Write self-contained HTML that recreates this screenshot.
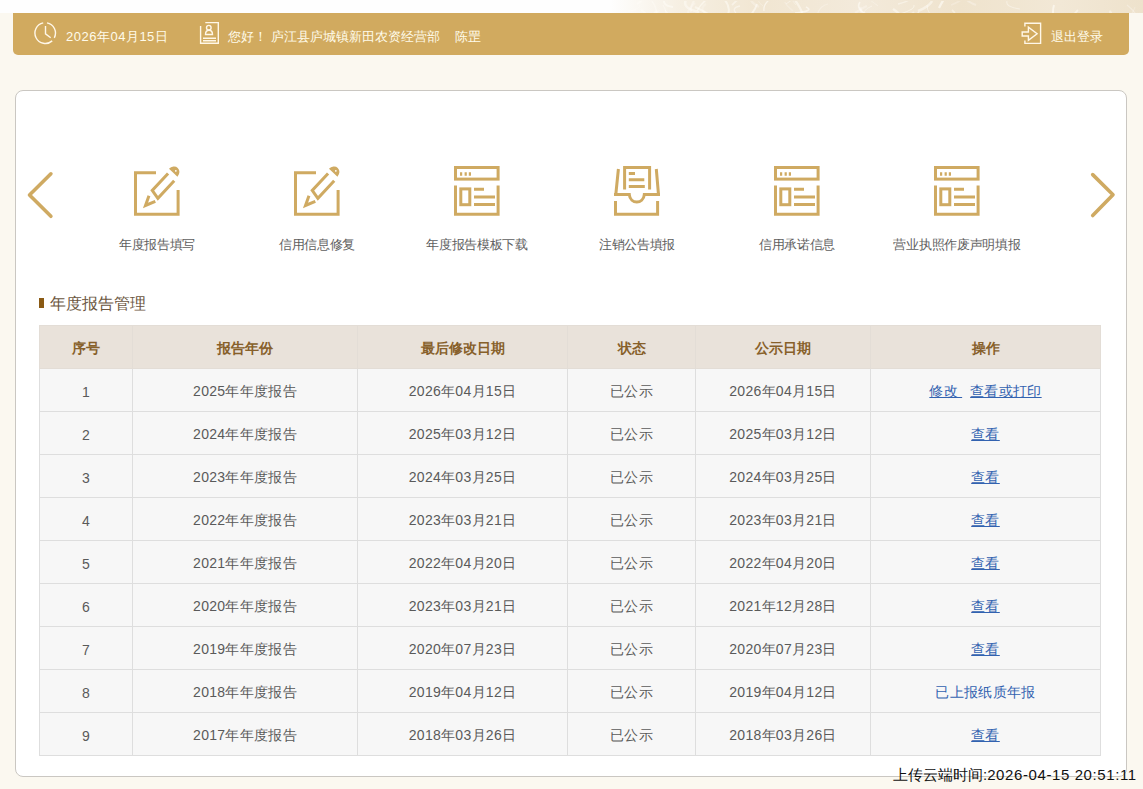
<!DOCTYPE html>
<html><head><meta charset="utf-8">
<style>
*{margin:0;padding:0;box-sizing:border-box}
html,body{width:1143px;height:789px;overflow:hidden}
body{background:#fbf8f0;font-family:"Liberation Sans",sans-serif;position:relative}
.topdeco{position:absolute;left:0;top:0;width:1143px;height:13px;overflow:hidden;background:linear-gradient(90deg,#fefefe 0,#fefefe 610px,#f6efe2 680px,#f1e6d2 760px,#f3eadb 860px,#efe3cd 960px,#f2e8d6 1060px,#eee2cc 1143px)}
.hdr{position:absolute;left:13px;top:13px;width:1116px;height:42px;background:#d1aa5f;border-radius:0 0 5px 5px;color:#fffbea;font-size:13px}
.hdr span{position:absolute;top:15px;line-height:18px;white-space:nowrap}
.hdr svg{position:absolute;left:0;top:0}
.card{position:absolute;left:15px;top:90px;width:1112px;height:687px;background:#fff;border:1px solid #cac7c2;border-radius:8px}
.ico{position:absolute;top:0;left:0}
.lbl{position:absolute;top:236px;width:160px;text-align:center;font-size:13px;letter-spacing:-0.3px;color:#5e5e5e;line-height:18px;white-space:nowrap}
.ttl{position:absolute;left:50px;top:294px;font-size:16px;color:#6b5640;line-height:20px}
.mark{position:absolute;left:39px;top:298px;width:5px;height:10px;background:#8a5a14}
table{position:absolute;left:39px;top:325px;border-collapse:collapse;table-layout:fixed;font-size:14px}
th{height:43px;padding-top:3px !important;background:#e9e2da;color:#87602a;font-weight:bold;text-align:center;border:1px solid #e3ddd6;padding:0}
td{height:43px;padding-top:3px !important;background:#f7f7f7;color:#5a5a5a;letter-spacing:0.3px;text-align:center;border:1px solid #dedede;padding:0}
td a{color:#3262b0;text-decoration:underline}
td .nl{color:#3262b0;text-decoration:none}
.stamp{position:absolute;left:893px;top:764px;font-size:15px;color:#111;line-height:22px;white-space:nowrap}
</style></head><body>
<div class="topdeco"><svg class="deco" width="1143" height="13" fill="none" stroke="#fffdf8"><path d="M792,-3 Q792,-0 796,4" stroke-width="0.9" stroke-opacity="0.43"/><path d="M640,4 Q638,10 628,10" stroke-width="1.0" stroke-opacity="0.33"/><path d="M953,15 Q962,16 955,25" stroke-width="2.3" stroke-opacity="0.35"/><path d="M696,-3 Q690,4 691,11" stroke-width="2.0" stroke-opacity="0.38"/><path d="M910,-5 Q914,-1 898,3" stroke-width="1.4" stroke-opacity="0.45"/><path d="M860,1 Q855,8 868,14" stroke-width="1.7" stroke-opacity="0.56"/><path d="M1007,0 Q1005,6 1020,8" stroke-width="1.1" stroke-opacity="0.42"/><path d="M641,9 Q648,13 648,20" stroke-width="2.1" stroke-opacity="0.46"/><path d="M927,4 Q927,13 937,19" stroke-width="0.9" stroke-opacity="0.50"/><path d="M963,16 Q961,22 972,25" stroke-width="0.8" stroke-opacity="0.41"/><path d="M709,-3 Q702,1 697,10" stroke-width="1.5" stroke-opacity="0.55"/><path d="M663,4 Q669,14 664,19" stroke-width="1.3" stroke-opacity="0.40"/><path d="M810,13 Q804,15 823,21" stroke-width="1.2" stroke-opacity="0.42"/><path d="M932,-0 Q930,5 918,10" stroke-width="2.5" stroke-opacity="0.49"/><path d="M893,8 Q901,13 898,14" stroke-width="2.4" stroke-opacity="0.53"/><path d="M828,3 Q819,5 817,15" stroke-width="1.2" stroke-opacity="0.31"/><path d="M800,-5 Q792,-2 786,3" stroke-width="0.8" stroke-opacity="0.56"/><path d="M945,-3 Q943,-1 939,7" stroke-width="2.3" stroke-opacity="0.60"/><path d="M867,5 Q864,6 855,12" stroke-width="2.3" stroke-opacity="0.31"/><path d="M632,15 Q633,15 633,22" stroke-width="1.8" stroke-opacity="0.59"/><path d="M1078,9 Q1071,16 1071,19" stroke-width="1.8" stroke-opacity="0.52"/><path d="M795,-1 Q802,9 803,15" stroke-width="2.3" stroke-opacity="0.51"/><path d="M740,5 Q731,7 736,12" stroke-width="1.3" stroke-opacity="0.49"/><path d="M1127,4 Q1136,11 1139,20" stroke-width="1.2" stroke-opacity="0.33"/><path d="M724,-2 Q731,6 728,13" stroke-width="2.0" stroke-opacity="0.53"/><path d="M665,9 Q670,15 676,22" stroke-width="1.1" stroke-opacity="0.53"/><path d="M796,12 Q794,20 809,22" stroke-width="2.1" stroke-opacity="0.31"/><path d="M687,-3 Q680,7 699,11" stroke-width="2.6" stroke-opacity="0.48"/><path d="M806,6 Q815,10 795,12" stroke-width="1.7" stroke-opacity="0.58"/><path d="M850,13 Q845,16 859,21" stroke-width="1.2" stroke-opacity="0.46"/><path d="M757,3 Q755,10 747,18" stroke-width="1.9" stroke-opacity="0.57"/><path d="M843,14 Q843,16 843,26" stroke-width="1.6" stroke-opacity="0.31"/><path d="M622,12 Q627,17 613,22" stroke-width="1.4" stroke-opacity="0.43"/><path d="M914,11 Q909,15 903,23" stroke-width="2.2" stroke-opacity="0.43"/><path d="M918,11 Q920,16 929,21" stroke-width="1.7" stroke-opacity="0.49"/><path d="M860,6 Q864,16 859,21" stroke-width="2.5" stroke-opacity="0.34"/><path d="M917,15 Q909,18 926,22" stroke-width="0.9" stroke-opacity="0.33"/><path d="M659,9 Q652,18 667,24" stroke-width="2.0" stroke-opacity="0.30"/><path d="M1088,15 Q1086,23 1080,31" stroke-width="2.6" stroke-opacity="0.54"/><path d="M706,3 Q699,7 706,13" stroke-width="2.1" stroke-opacity="0.26"/><path d="M914,4 Q916,8 900,13" stroke-width="0.9" stroke-opacity="0.59"/><path d="M1038,15 Q1029,22 1027,24" stroke-width="1.3" stroke-opacity="0.30"/><path d="M844,14 Q837,22 853,23" stroke-width="1.8" stroke-opacity="0.50"/><path d="M667,-5 Q659,4 673,6" stroke-width="1.9" stroke-opacity="0.53"/><path d="M664,13 Q663,19 652,27" stroke-width="1.8" stroke-opacity="0.57"/><path d="M762,-3 Q754,-2 763,5" stroke-width="0.9" stroke-opacity="0.32"/><path d="M785,1 Q785,3 793,10" stroke-width="1.4" stroke-opacity="0.26"/><path d="M753,-6 Q747,-0 759,6" stroke-width="2.5" stroke-opacity="0.29"/><path d="M1054,4 Q1052,11 1054,18" stroke-width="2.0" stroke-opacity="0.59"/><path d="M802,12 Q800,17 807,25" stroke-width="0.9" stroke-opacity="0.30"/><path d="M657,10 Q649,17 651,18" stroke-width="2.4" stroke-opacity="0.48"/><path d="M769,-1 Q763,4 764,10" stroke-width="1.3" stroke-opacity="0.59"/><path d="M1135,6 Q1132,13 1128,22" stroke-width="0.8" stroke-opacity="0.38"/><path d="M872,5 Q862,9 863,16" stroke-width="1.0" stroke-opacity="0.39"/><path d="M642,-6 Q644,-1 637,3" stroke-width="2.2" stroke-opacity="0.48"/><path d="M999,13 Q1009,15 996,23" stroke-width="2.1" stroke-opacity="0.48"/><path d="M643,12 Q648,21 654,25" stroke-width="1.1" stroke-opacity="0.43"/><path d="M887,12 Q889,23 896,27" stroke-width="2.0" stroke-opacity="0.49"/><path d="M742,-5 Q734,2 732,4" stroke-width="1.8" stroke-opacity="0.47"/><path d="M952,9 Q958,14 952,15" stroke-width="1.7" stroke-opacity="0.44"/><path d="M969,-5 Q961,-2 976,4" stroke-width="2.1" stroke-opacity="0.32"/><path d="M1012,15 Q1012,22 1012,25" stroke-width="2.2" stroke-opacity="0.47"/><path d="M961,-4 Q966,-2 951,4" stroke-width="1.8" stroke-opacity="0.25"/><path d="M652,-0 Q656,5 657,13" stroke-width="1.7" stroke-opacity="0.41"/><path d="M867,-3 Q877,4 878,5" stroke-width="0.8" stroke-opacity="0.41"/><path d="M1055,15 Q1049,23 1053,24" stroke-width="1.2" stroke-opacity="0.45"/><path d="M695,6 Q702,9 708,13" stroke-width="2.4" stroke-opacity="0.50"/><path d="M743,14 Q733,17 742,20" stroke-width="1.6" stroke-opacity="0.36"/><path d="M695,2 Q685,11 689,16" stroke-width="2.3" stroke-opacity="0.29"/><path d="M1111,10 Q1108,13 1122,19" stroke-width="2.6" stroke-opacity="0.46"/></svg></div>
<div class="hdr">
 <svg width="1116" height="41" viewBox="13 13 1116 41" fill="none" stroke="#fff7e8" stroke-width="1.4">
  <path d="M43.2,22.9 A10.4,10.4 0 1 0 52.2,40.9"/>
  <path d="M47,22.9 A10.4,10.4 0 0 1 54.3,37.9"/>
  <path d="M45.5,26 V33.8 L50.7,37.7"/>
  <path d="M205.3,22.6 H218.3 V43.3 H200.6 V26"/>
  <circle cx="208.8" cy="27.7" r="2.3"/>
  <path d="M205.5,34.5 Q205.5,30.3 209,30.3 Q212.5,30.3 212.5,34.5 Z"/>
  <path d="M203,38.2 H216 M203,40.8 H216"/>
  <path d="M1024.9,26.4 V23.3 H1040.6 V43.4 H1024.9 V40.4"/>
  <path d="M1022.2,32 H1028.4 V27.2 L1037.1,33.8 L1028.4,40.4 V36 H1022.2 Z"/>
 </svg>
 <span style="left:53px;letter-spacing:0.5px">2026年04月15日</span>
 <span style="left:215px">您好！</span>
 <span style="left:258px">庐江县庐城镇新田农资经营部</span>
 <span style="left:442px">陈罡</span>
 <span style="left:1038px">退出登录</span>
</div>
<div class="card"></div>

<!-- carousel arrows & icons (page coords) -->
<svg class="ico" width="1143" height="260" fill="none" stroke="#cfaa62" stroke-width="3">
 <path d="M50.9,173.8 L29.5,195 L50.9,216.3" stroke-width="3.6" stroke-linecap="round" stroke-linejoin="round"/>
 <path d="M1092.7,174.6 L1113,194.8 L1092.7,215.5" stroke-width="3.6" stroke-linecap="round" stroke-linejoin="round"/>
 <g id="pen" transform="translate(134,166)">
  <path d="M22,6.7 H1.5 V48.25 H44.1 V24"/>
  <g transform="translate(10.4,40.9) rotate(-47)">
   <path d="M11.3,-4.3 L1.8,-0.2 L11.5,4.2"/>
   <path d="M40.6,-5.5 L17.4,-5.5 L15.5,4 L39.4,4"/>
   <path d="M44.6,-8 A6.7,5.8 0 0 1 44.6,3.6 Z" fill="#cfaa62" stroke="none"/>
   <circle cx="47.8" cy="-1.6" r="0.9" fill="#fff" stroke="none"/>
  </g>
 </g>
 <use href="#pen" x="160" y="0"/>
 <g id="tpl" transform="translate(454,166)">
  <rect x="1.5" y="1.5" width="42.6" height="11.6"/>
  <path d="M6,8 H8.2 M10.6,8 H12.8 M14.8,8 H17" stroke-width="3.5"/>
  <path d="M1.5,19.6 V48.25 H44.1 V19.6"/>
  <rect x="6.8" y="22.9" width="9" height="15.8"/>
  <path d="M20,23.2 H30 M20,30.9 H41 M20,38.4 H41"/>
 </g>
 <use href="#tpl" x="320" y="0"/>
 <use href="#tpl" x="480" y="0"/>
 <g transform="translate(614,166)">
  <path d="M10.6,23.6 V1.5 H35.6 V23.6"/>
  <path d="M14.8,7.6 H21 M14.8,13.7 H30.3 M14.8,20.6 H30.8"/>
  <path d="M4.4,3 L1.8,28.5 M42.3,3 L44.5,28.5"/>
  <path d="M0,28.6 H15.3 C16.3,38.6 29.3,38.6 30.3,28.6 H46"/>
  <path d="M1.5,35 V48.25 H43.6 V35"/>
 </g>
</svg>
<div class="lbl" style="left:77px">年度报告填写</div>
<div class="lbl" style="left:237px">信用信息修复</div>
<div class="lbl" style="left:397px">年度报告模板下载</div>
<div class="lbl" style="left:557px">注销公告填报</div>
<div class="lbl" style="left:717px">信用承诺信息</div>
<div class="lbl" style="left:877px">营业执照作废声明填报</div>

<div class="mark"></div>
<div class="ttl">年度报告管理</div>

<table>
 <colgroup><col style="width:93px"><col style="width:225px"><col style="width:210px"><col style="width:128px"><col style="width:175px"><col style="width:230px"></colgroup>
 <tr><th>序号</th><th>报告年份</th><th>最后修改日期</th><th>状态</th><th>公示日期</th><th>操作</th></tr>
 <tr><td>1</td><td>2025年年度报告</td><td>2026年04月15日</td><td>已公示</td><td>2026年04月15日</td><td><a>修改&nbsp;</a><a style="margin-left:8px">查看或打印</a></td></tr>
 <tr><td>2</td><td>2024年年度报告</td><td>2025年03月12日</td><td>已公示</td><td>2025年03月12日</td><td><a>查看</a></td></tr>
 <tr><td>3</td><td>2023年年度报告</td><td>2024年03月25日</td><td>已公示</td><td>2024年03月25日</td><td><a>查看</a></td></tr>
 <tr><td>4</td><td>2022年年度报告</td><td>2023年03月21日</td><td>已公示</td><td>2023年03月21日</td><td><a>查看</a></td></tr>
 <tr><td>5</td><td>2021年年度报告</td><td>2022年04月20日</td><td>已公示</td><td>2022年04月20日</td><td><a>查看</a></td></tr>
 <tr><td>6</td><td>2020年年度报告</td><td>2023年03月21日</td><td>已公示</td><td>2021年12月28日</td><td><a>查看</a></td></tr>
 <tr><td>7</td><td>2019年年度报告</td><td>2020年07月23日</td><td>已公示</td><td>2020年07月23日</td><td><a>查看</a></td></tr>
 <tr><td>8</td><td>2018年年度报告</td><td>2019年04月12日</td><td>已公示</td><td>2019年04月12日</td><td><span class="nl">已上报纸质年报</span></td></tr>
 <tr><td>9</td><td>2017年年度报告</td><td>2018年03月26日</td><td>已公示</td><td>2018年03月26日</td><td><a>查看</a></td></tr>
</table>

<div class="stamp">上传云端时间:<span style="letter-spacing:0.6px">2026-04-15 20:51:11</span></div>
</body></html>
